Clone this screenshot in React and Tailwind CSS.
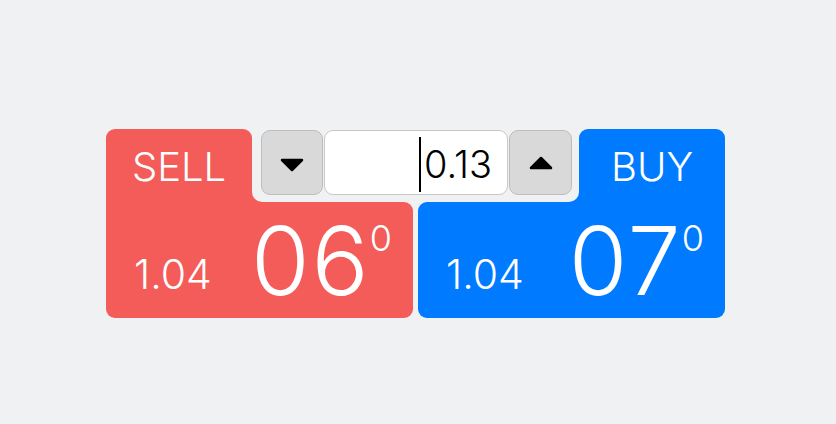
import React from 'react';

const RED = 'bg-[#f35c58]';
const BLUE = 'bg-[#007bff]';

function Triangle({ up }) {
  return (
    <svg width="26" height="15" viewBox="0 0 26 15" className={up ? '' : 'mt-[5px]'}>
      <path
        d={up ? 'M3 13 L13 3 L23 13 Z' : 'M3 2 L13 12 L23 2 Z'}
        fill="#000"
        stroke="#000"
        strokeWidth="2.5"
        strokeLinejoin="round"
      />
    </svg>
  );
}

function StepButton({ up }) {
  return (
    <button className="flex h-full w-full items-center justify-center rounded-[9px] border border-[#bdbdbd] bg-[#d9d9d9]">
      <Triangle up={up} />
    </button>
  );
}

function PriceBlock({ small, big, side }) {
  const shape = side === 'sell' ? 'rounded-b-[9px] rounded-tr-[9px]' : 'rounded-b-[9px] rounded-tl-[9px]';
  return (
    <div
      className={`${side === 'sell' ? RED : BLUE} ${shape} flex flex-1 items-end justify-between pl-[28px] pr-[21px] pb-[10px] text-white`}
    >
      <span className="mb-[13px] text-[41px] leading-none font-light">{small}</span>
      <div className="flex items-start">
        <span className="text-[95px] leading-none font-light tracking-[2px]">{big}</span>
        <span className="mt-[7px] ml-[-1px] text-[36px] leading-none font-light">0</span>
      </div>
    </div>
  );
}

function App() {
  return (
    <div
      className="min-h-screen bg-[#f0f1f3] pl-[106px] pt-[129px]"
      style={{ fontFamily: 'Inter, "Noto Sans", sans-serif' }}
    >
      <div className="flex w-[619px] flex-col">
        <div className="flex h-[73px]">
          <div className={`${RED} flex w-[146px] items-center justify-center rounded-t-[9px] pt-[3px] text-[40px] leading-none font-light text-white`}>
            SELL
          </div>
          <div className="flex-1 bg-[linear-gradient(to_right,#f35c58_50%,#007bff_50%)]">
            <div className="flex h-full gap-[1px] rounded-b-[10px] bg-[#f0f1f3] pl-[9px] pr-[7px] pt-[1px] pb-[7px]">
              <div className="w-[62px]">
                <StepButton />
              </div>
              <div className="flex w-[184px] items-center justify-end rounded-[9px] border border-[#c8c8c8] bg-white pr-[15px]">
                <span className="mr-[3px] mt-[3px] h-[55px] w-[2px] bg-black" />
                <span className="mt-[3px] text-[38px] leading-none font-light text-black">0.13</span>
              </div>
              <div className="w-[63px]">
                <StepButton up />
              </div>
            </div>
          </div>
          <div className={`${BLUE} flex w-[146px] items-center justify-center rounded-t-[9px] pt-[3px] text-[40px] leading-none font-light text-white`}>
            BUY
          </div>
        </div>
        <div className="flex h-[116px] gap-[5px]">
          <PriceBlock side="sell" small="1.04" big="06" />
          <PriceBlock side="buy" small="1.04" big="07" />
        </div>
      </div>
    </div>
  );
}

export default App;
